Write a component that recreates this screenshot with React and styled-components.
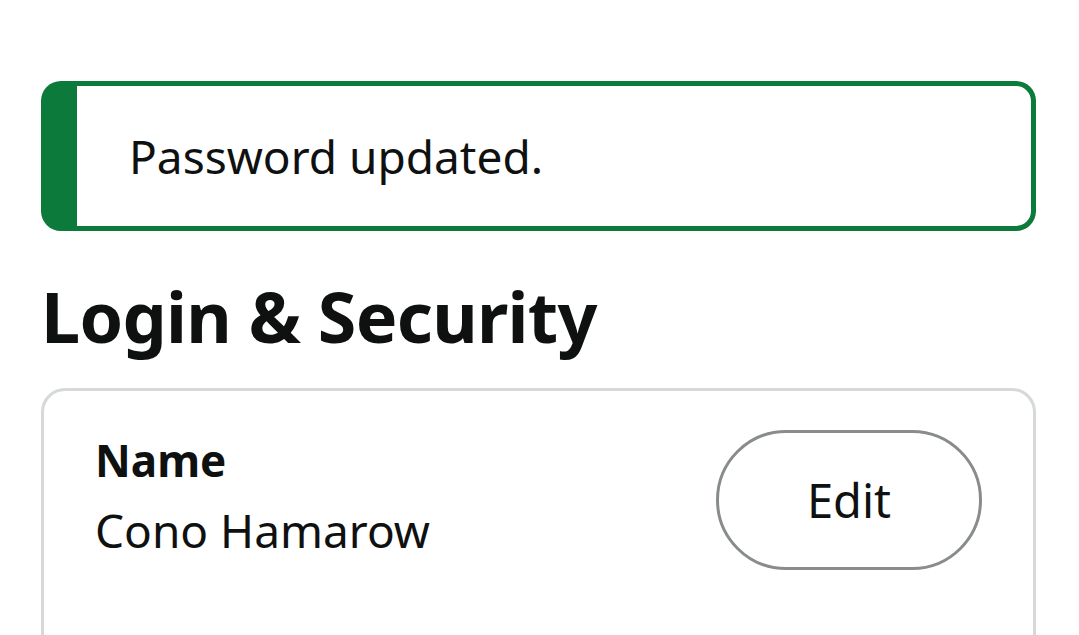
import React from "react";
import styled, { createGlobalStyle } from "styled-components";

const Global = createGlobalStyle`
  html, body { margin: 0; padding: 0; background: #ffffff; }
  body { font-family: "Noto Sans", "Open Sans", Arial, sans-serif; color: #0f1111; overflow: hidden; }
`;

const Page = styled.main`
  padding: 81px 43px 0 41px;
  display: flex;
  flex-direction: column;
`;

const Alert = styled.div`
  box-sizing: border-box;
  height: 150px;
  border: 5px solid #0b7a3b;
  border-left-width: 36px;
  border-radius: 20px;
  display: flex;
  align-items: center;
  padding-left: 52px;
`;

const AlertText = styled.p`
  margin: 0;
  font-size: 46px;
  line-height: 1;
`;

const Heading = styled.h1`
  margin: 50px 0 0 0;
  font-size: 70px;
  font-weight: 700;
  line-height: 1;
  letter-spacing: -0.7px;
`;

const Card = styled.section`
  margin-top: 37px;
  box-sizing: border-box;
  height: 300px;
  border: 3px solid #d5d9d9;
  border-radius: 24px;
  padding: 34px 51px 0 51px;
  display: flex;
  justify-content: space-between;
  align-items: flex-start;
`;

const Field = styled.div`
  display: flex;
  flex-direction: column;
`;

const Label = styled.span`
  font-size: 44px;
  font-weight: 700;
  line-height: 70px;
`;

const Value = styled.span`
  font-size: 46px;
  line-height: 70px;
`;

const EditButton = styled.button`
  box-sizing: border-box;
  margin-top: 5px;
  width: 266px;
  height: 140px;
  border: 3px solid #888c8c;
  border-radius: 70px;
  background: #ffffff;
  font-family: inherit;
  font-size: 47px;
  color: #0f1111;
  cursor: pointer;
`;

export default function App() {
  return (
    <>
      <Global />
      <Page>
        <Alert>
          <AlertText>Password updated.</AlertText>
        </Alert>
        <Heading>Login &amp; Security</Heading>
        <Card>
          <Field>
            <Label>Name</Label>
            <Value>Cono Hamarow</Value>
          </Field>
          <EditButton>Edit</EditButton>
        </Card>
      </Page>
    </>
  );
}
